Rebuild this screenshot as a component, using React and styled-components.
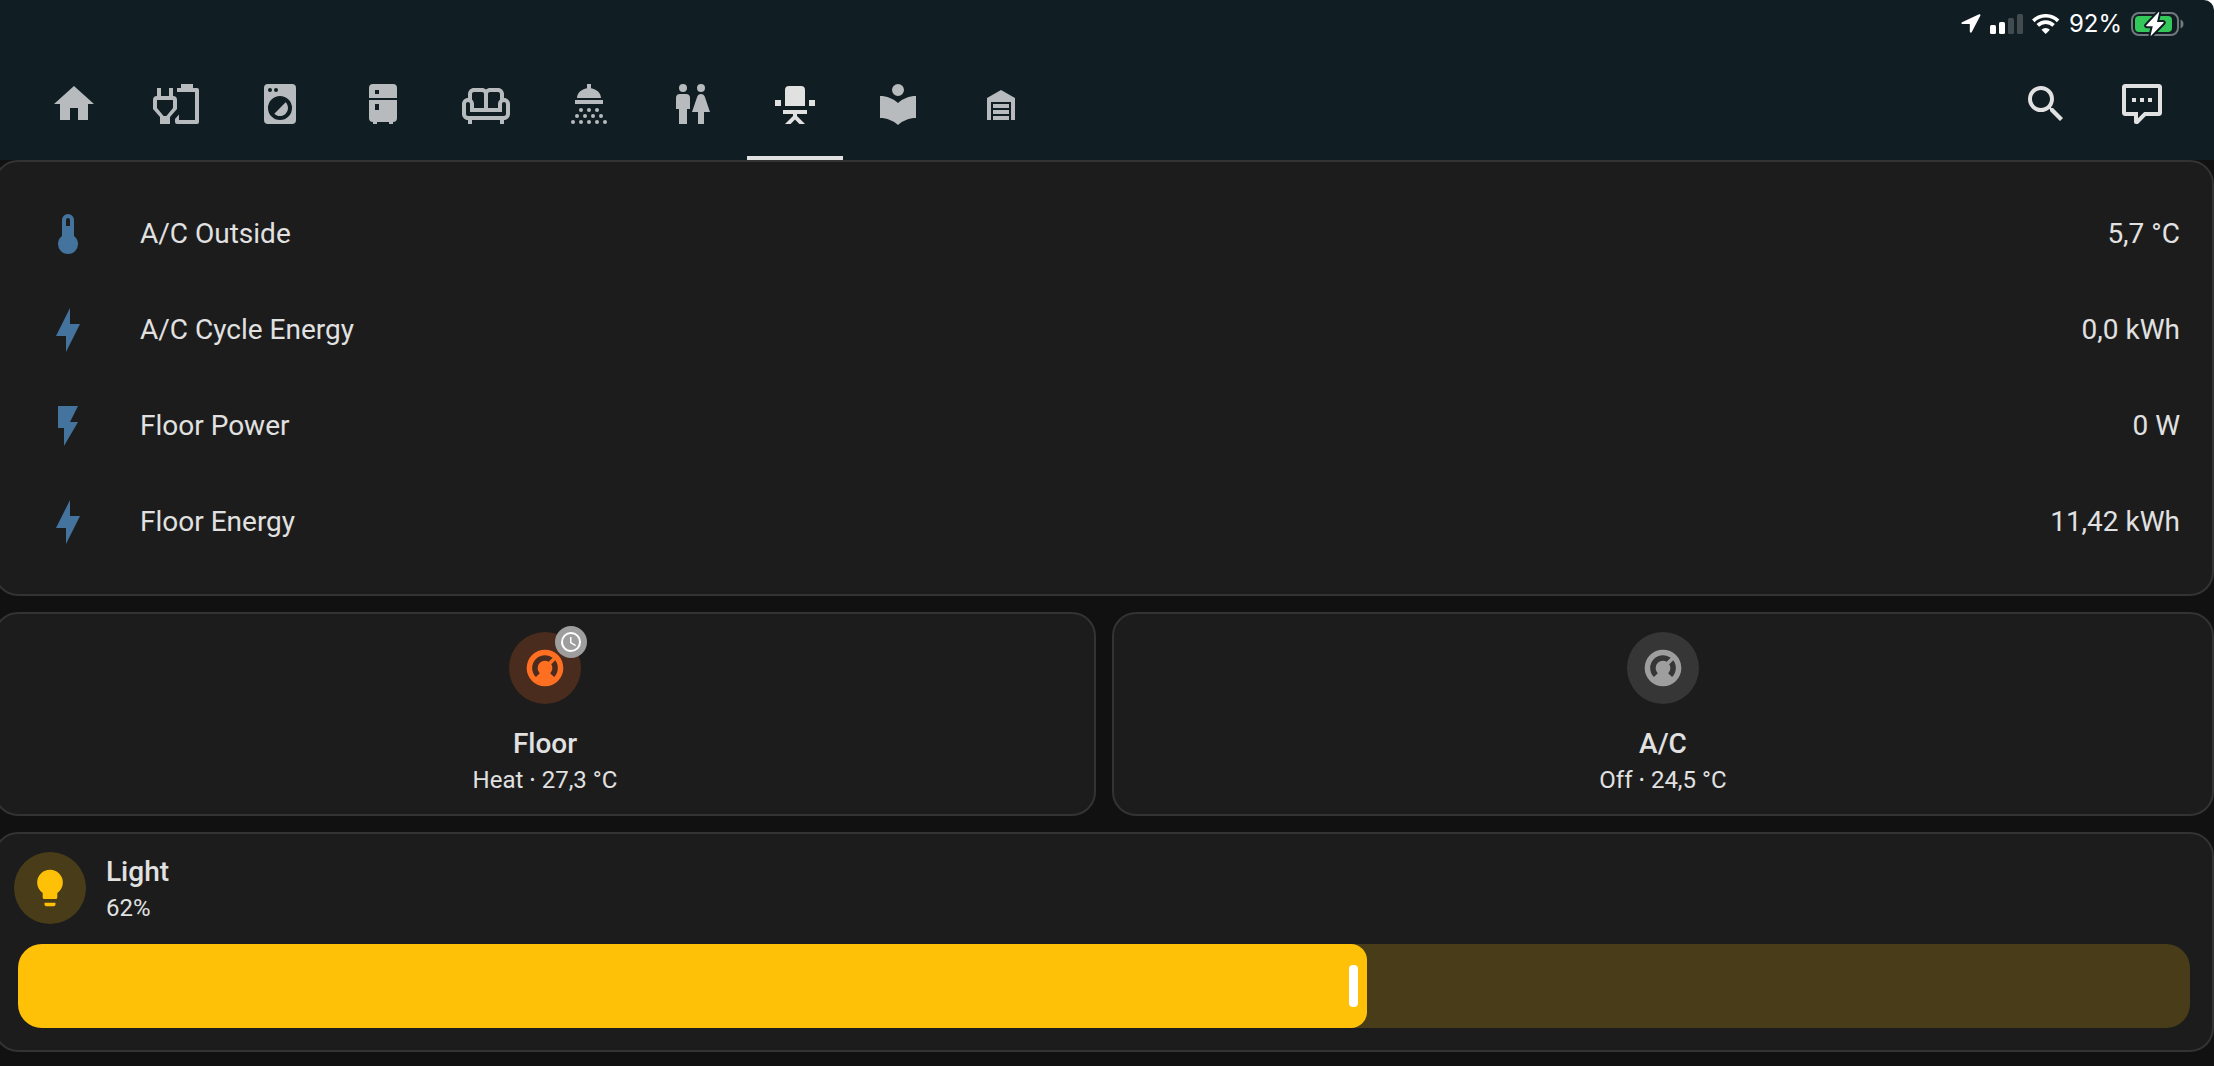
import React, { useState } from "react";
import styled, { createGlobalStyle } from "styled-components";

const icons = {
  home: "M10,20V14H14V20H19V12H22L12,3L2,12H5V20H10Z",
  plugBattery:
    "M8 4V8H4V4H2V8A2 2 0 0 0 0 10V14.5L3.5 18.5V22H8.5V18.5L12 14.5V10A2 2 0 0 0 10 8V4H8M10 14L6.7 18H5.3L2 14V10H10V14M13 20V17.3L11 19.5V21A1 1 0 0 0 12 22H22A1 1 0 0 0 23 21V5A1 1 0 0 0 22 4H20V2H14V4H12V6H21V20H13Z",
  washer:
    "M14.83,11.17C16.39,12.73 16.39,15.27 14.83,16.83C13.27,18.39 10.73,18.39 9.17,16.83L14.83,11.17M6,2H18A2,2 0 0,1 20,4V20A2,2 0 0,1 18,22H6A2,2 0 0,1 4,20V4A2,2 0 0,1 6,2M7,4A1,1 0 0,0 6,5A1,1 0 0,0 7,6A1,1 0 0,0 8,5A1,1 0 0,0 7,4M10,4A1,1 0 0,0 9,5A1,1 0 0,0 10,6A1,1 0 0,0 11,5A1,1 0 0,0 10,4M12,8A6,6 0 0,0 6,14A6,6 0 0,0 12,20A6,6 0 0,0 18,14A6,6 0 0,0 12,8Z",
  fridge:
    "M7,2H17A2,2 0 0,1 19,4V9H5V4A2,2 0 0,1 7,2M19,19A2,2 0 0,1 17,21V22H15V21H9V22H7V21A2,2 0 0,1 5,19V10H19V19M8,5V7H10V5H8M8,12V15H10V12H8Z",
  sofa: "M21 9V7C21 5.35 19.65 4 18 4H14C13.23 4 12.53 4.3 12 4.78C11.47 4.3 10.77 4 10 4H6C4.35 4 3 5.35 3 7V9C1.35 9 0 10.35 0 12V17C0 18.65 1.35 20 3 20V22H5V20H19V22H21V20C22.65 20 24 18.65 24 17V12C24 10.35 22.65 9 21 9M14 6H18C18.55 6 19 6.45 19 7V9.78C18.39 10.33 18 11.12 18 12V14H13V7C13 6.45 13.45 6 14 6M5 7C5 6.45 5.45 6 6 6H10C10.55 6 11 6.45 11 7V14H6V12C6 11.12 5.61 10.33 5 9.78V7M22 17C22 17.55 21.55 18 21 18H3C2.45 18 2 17.55 2 17V12C2 11.45 2.45 11 3 11S4 11.45 4 12V16H20V12C20 11.45 20.45 11 21 11S22 11.45 22 12V17Z",
  shower:
    "M11 2H13V4.1C15.8 4.5 18 6.5 18 9H6C6 6.5 8.2 4.5 11 4.1V2M5 10H19V12H5V10M7 15a1 1 0 1 0 2 0a1 1 0 1 0 -2 0M11 15a1 1 0 1 0 2 0a1 1 0 1 0 -2 0M15 15a1 1 0 1 0 2 0a1 1 0 1 0 -2 0M5 18a1 1 0 1 0 2 0a1 1 0 1 0 -2 0M9 18a1 1 0 1 0 2 0a1 1 0 1 0 -2 0M13 18a1 1 0 1 0 2 0a1 1 0 1 0 -2 0M17 18a1 1 0 1 0 2 0a1 1 0 1 0 -2 0M3 21a1 1 0 1 0 2 0a1 1 0 1 0 -2 0M7 21a1 1 0 1 0 2 0a1 1 0 1 0 -2 0M11 21a1 1 0 1 0 2 0a1 1 0 1 0 -2 0M15 21a1 1 0 1 0 2 0a1 1 0 1 0 -2 0M19 21a1 1 0 1 0 2 0a1 1 0 1 0 -2 0",
  people:
    "M7.5,2A2,2 0 0,1 9.5,4A2,2 0 0,1 7.5,6A2,2 0 0,1 5.5,4A2,2 0 0,1 7.5,2M6,7H9A2,2 0 0,1 11,9V14.5H9.5V22H5.5V14.5H4V9A2,2 0 0,1 6,7M16.5,2A2,2 0 0,1 18.5,4A2,2 0 0,1 16.5,6A2,2 0 0,1 14.5,4A2,2 0 0,1 16.5,2M15,22V16H12L14.59,8.41C14.84,7.59 15.6,7 16.5,7C17.4,7 18.16,7.59 18.41,8.41L21,16H18V22H15Z",
  chair:
    "M9 3H15A2 2 0 0 1 17 5V13H7V5A2 2 0 0 1 9 3M2 10H5V13H2V10M19 10H22V13H19V10M6 15H18V17H13V18L17 22H14.2L12 19.8L9.8 22H7L11 18V17H6V15Z",
  reading:
    "M12,8A3,3 0 0,0 15,5A3,3 0 0,0 12,2A3,3 0 0,0 9,5A3,3 0 0,0 12,8M12,11.54C9.64,9.35 6.5,8 3,8V19C6.5,19 9.64,20.35 12,22.54C14.36,20.35 17.5,19 21,19V8C17.5,8 14.36,9.35 12,11.54Z",
  garage:
    "M19,20H17V11H7V20H5V9L12,5L19,9V20M8,12H16V14H8V12M8,15H16V17H8V15M16,18V20H8V18H16Z",
  search:
    "M9.5,3A6.5,6.5 0 0,1 16,9.5C16,11.11 15.41,12.59 14.44,13.73L14.71,14H15.5L20.5,19L19,20.5L14,15.5V14.71L13.73,14.44C12.59,15.41 11.11,16 9.5,16A6.5,6.5 0 0,1 3,9.5A6.5,6.5 0 0,1 9.5,3M9.5,5C7,5 5,7 5,9.5C5,12 7,14 9.5,14C12,14 14,12 14,9.5C14,7 12,5 9.5,5Z",
  message:
    "M20.5 2H3.5C2.7 2 2 2.7 2 3.5V16.5C2 17.3 2.7 18 3.5 18H8V21C8 21.6 8.4 22 9 22H9.5C9.7 22 10 21.9 10.2 21.7L13.9 18H20.5C21.3 18 22 17.3 22 16.5V3.5C22 2.7 21.3 2 20.5 2M20 16H13.1L10 19.1V16H4V4H20V16M17 11H15V9H17V11M13 11H11V9H13V11M9 11H7V9H9V11Z",
  thermometer:
    "M15 13V5A3 3 0 0 0 9 5V13A5 5 0 1 0 15 13M12 4A1 1 0 0 1 13 5V8H11V5A1 1 0 0 1 12 4Z",
  bolt: "M11 15H6L13 1V9H18L11 23V15Z",
  flash: "M7,2V13H10V22L17,10H13L17,2H7Z",
  thermostat:
    "M16.95,16.95L14.83,14.83C15.55,14.1 16,13.1 16,12C16,11.26 15.79,10.57 15.43,10L17.6,7.81C18.5,9 19,10.43 19,12C19,13.93 18.22,15.68 16.95,16.95M12,5C13.57,5 15,5.5 16.19,6.4L14,8.56C13.43,8.21 12.74,8 12,8A4,4 0 0,0 8,12C8,13.1 8.45,14.1 9.17,14.83L7.05,16.95C5.78,15.68 5,13.93 5,12A7,7 0 0,1 12,5M12,2A10,10 0 0,0 2,12A10,10 0 0,0 12,22A10,10 0 0,0 22,12A10,10 0 0,0 12,2Z",
  clock:
    "M12,20A8,8 0 0,0 20,12A8,8 0 0,0 12,4A8,8 0 0,0 4,12A8,8 0 0,0 12,20M12,2A10,10 0 0,1 22,12A10,10 0 0,1 12,22C6.47,22 2,17.5 2,12A10,10 0 0,1 12,2M12.5,7V12.25L17,14.92L16.25,16.15L11,13V7H12.5Z",
  bulb: "M12,2A7,7 0 0,0 5,9C5,11.38 6.19,13.47 8,14.74V17A1,1 0 0,0 9,18H15A1,1 0 0,0 16,17V14.74C17.81,13.47 19,11.38 19,9A7,7 0 0,0 12,2M9,21A1,1 0 0,0 10,22H14A1,1 0 0,0 15,21V20H9V21Z",
};

const tabs = [
  { id: "home", label: "Home" },
  { id: "plugBattery", label: "Energy" },
  { id: "washer", label: "Laundry" },
  { id: "fridge", label: "Kitchen" },
  { id: "sofa", label: "Living room" },
  { id: "shower", label: "Bathroom" },
  { id: "people", label: "Toilet" },
  { id: "chair", label: "Office" },
  { id: "reading", label: "Library" },
  { id: "garage", label: "Garage" },
];

const sensors = [
  { icon: "thermometer", name: "A/C Outside", state: "5,7 °C" },
  { icon: "bolt", name: "A/C Cycle Energy", state: "0,0 kWh" },
  { icon: "flash", name: "Floor Power", state: "0 W" },
  { icon: "bolt", name: "Floor Energy", state: "11,42 kWh" },
];

const Icon = ({ name, size = 48 }) => (
  <svg width={size} height={size} viewBox="0 0 24 24" fill="currentColor" aria-hidden="true">
    <path d={icons[name]} />
  </svg>
);

const StatusIcons = () => (
  <StatusBar>
    <svg width="20" height="20" viewBox="0 0 20 20" fill="#fff">
      <path d="M18.1.3 1 8.2c-1 .5-.8 1.8.4 1.8l7.4.1v7.5c0 1.200 1.500 1.500 2 .4L19.400 1.500c.3-.8-.5-1.500-1.300-1.200Z" />
    </svg>
    <svg width="33" height="20" viewBox="0 0 33 20" fill="#fff">
      <rect x="0" y="11" width="6" height="9" rx="1.500" />
      <rect x="9" y="8" width="6" height="12" rx="1.500" />
      <rect x="18" y="4" width="6" height="16" rx="1.500" fill="#414b50" />
      <rect x="27" y="0" width="6" height="20" rx="1.500" fill="#414b50" />
    </svg>
    <svg width="28" height="20" viewBox="0 0 28 20" fill="none" stroke="#fff" strokeWidth="3.600">
      <path d="M1.300 6.900A17.600 17.600 0 0 1 26.100 6.900" />
      <path d="M5.800 11.400A11.200 11.200 0 0 1 21.600 11.400" />
      <path d="M13.700 20 9.500 15.700A6 6 0 0 1 17.900 15.700Z" fill="#fff" stroke="none" />
    </svg>
    <Percent>92%</Percent>
    <svg width="53" height="24" viewBox="0 0 53 24">
      <rect x="1" y="1" width="46" height="22" rx="7" fill="none" stroke="#70787b" strokeWidth="2" />
      <path d="M49.500 7.500c4 1.500 4 7.500 0 9Z" fill="#70787b" />
      <rect x="4" y="4" width="37" height="16" rx="4" fill="#34c759" />
      <path
        d="M27.500.3 15.300 13.200c-.4.5-.2 1 .5 1h6L19.600 23.300c-.1.500.4.600.7.300L32.500 11c.5-.5.200-1.100-.4-1.100H26L28.200.600c.1-.5-.3-.7-.7-.3Z"
        fill="#fff"
        stroke="#101e24"
        strokeWidth="4"
        paintOrder="stroke"
      />
    </svg>
  </StatusBar>
);

const Climate = ({ name, state, color, tint, badge }) => (
  <ClimateCard>
    <Shape $color={color} $tint={tint}>
      <Icon name="thermostat" size={44} />
      {badge && (
        <Badge>
          <Icon name={badge} size={24} />
        </Badge>
      )}
    </Shape>
    <Info $center>
      <Primary>{name}</Primary>
      <Secondary>{state}</Secondary>
    </Info>
  </ClimateCard>
);

export default function App() {
  const [active, setActive] = useState("chair");
  const [brightness, setBrightness] = useState(62.1);

  return (
    <>
      <GlobalStyle />
      <HeaderWrap>
        <Header>
          <StatusIcons />
          <Toolbar>
            <Tabs>
              {tabs.map((tab) => (
                <Tab
                  key={tab.id}
                  href={`#${tab.id}`}
                  aria-label={tab.label}
                  $active={tab.id === active}
                  onClick={() => setActive(tab.id)}
                >
                  <Icon name={tab.id} />
                </Tab>
              ))}
            </Tabs>
            <Actions>
              <IconBtn type="button" aria-label="Search">
                <Icon name="search" />
              </IconBtn>
              <IconBtn type="button" aria-label="Assist">
                <Icon name="message" />
              </IconBtn>
            </Actions>
          </Toolbar>
        </Header>
      </HeaderWrap>
      <View>
        <EntitiesCard>
          {sensors.map((sensor) => (
            <EntityRow key={sensor.name}>
              <EntityIcon>
                <Icon name={sensor.icon} />
              </EntityIcon>
              <EntityName>{sensor.name}</EntityName>
              <span>{sensor.state}</span>
            </EntityRow>
          ))}
        </EntitiesCard>
        <Columns>
          <Climate name="Floor" state="Heat ⸱ 27,3 °C" color="#ff6f22" tint="#4a2c1e" badge="clock" />
          <Climate name="A/C" state="Off ⸱ 24,5 °C" color="#9e9e9e" tint="#363636" />
        </Columns>
        <LightCard>
          <LightHead>
            <Shape $color="#ffc107" $tint="#493c18">
              <Icon name="bulb" size={44} />
            </Shape>
            <Info>
              <Primary as="label" htmlFor="light">
                Light
              </Primary>
              <Secondary>{Math.round(brightness)}%</Secondary>
            </Info>
          </LightHead>
          <Slider>
            <SliderFill style={{ width: `${brightness}%` }}>
              <SliderHandle />
            </SliderFill>
            <SliderInput
              id="light"
              type="range"
              min="0"
              max="100"
              step="0.1"
              value={brightness}
              onChange={(e) => setBrightness(Number(e.target.value))}
            />
          </Slider>
        </LightCard>
      </View>
    </>
  );
}

const GlobalStyle = createGlobalStyle`
  * {
    box-sizing: border-box;
  }
  body {
    margin: 0;
    background-color: #111111;
    color: #e1e1e1;
    font-family: Roboto, "Noto Sans", sans-serif;
    font-size: 28px;
    overflow-x: hidden;
  }
  svg {
    display: block;
    flex-shrink: 0;
  }
`;

const HeaderWrap = styled.div`
  background-color: #ffffff;
`;

const Header = styled.header`
  background-color: #101e24;
  border-top-right-radius: 10px;
`;

const StatusBar = styled.div`
  display: flex;
  align-items: center;
  justify-content: flex-end;
  gap: 9px;
  height: 48px;
  padding-right: 30px;
`;

const Percent = styled.span`
  font-family: Inter, sans-serif;
  font-size: 24px;
  line-height: 24px;
  color: #ffffff;
`;

const Toolbar = styled.div`
  display: flex;
  justify-content: space-between;
  height: 112px;
  padding: 0 24px 0 26px;
`;

const Tabs = styled.nav`
  display: flex;
  gap: 7px;
`;

const Tab = styled.a`
  display: flex;
  align-items: center;
  padding: 4px 24px 0;
  color: ${(props) => (props.$active ? "#e1e1e1" : "#b7bbbd")};
  border-bottom: 4px solid ${(props) => (props.$active ? "#e1e1e1" : "transparent")};
`;

const Actions = styled.div`
  display: flex;
`;

const IconBtn = styled.button`
  display: flex;
  align-items: center;
  padding: 0 24px;
  border: 0;
  background: none;
  color: #e1e1e1;
`;

const View = styled.main`
  display: flex;
  flex-direction: column;
  gap: 16px;
  margin-left: -6px;
`;

const Card = styled.section`
  background-color: #1c1c1c;
  border: 2px solid #333333;
  border-radius: 24px;
`;

const EntitiesCard = styled(Card).attrs({ as: "ul" })`
  display: flex;
  flex-direction: column;
  gap: 16px;
  margin: 0;
  padding: 32px;
  list-style: none;
`;

const EntityRow = styled.li`
  display: flex;
  align-items: center;
  height: 80px;
  line-height: 40px;
`;

const EntityIcon = styled.div`
  display: flex;
  justify-content: center;
  width: 80px;
  color: #44739e;
`;

const EntityName = styled.span`
  flex: 1;
  padding-left: 32px;
`;

const Columns = styled.div`
  display: grid;
  grid-template-columns: 1fr 1fr;
  gap: 16px;
`;

const ClimateCard = styled(Card)`
  display: flex;
  flex-direction: column;
  align-items: center;
  gap: 20px;
  padding: 18px;
`;

const Shape = styled.div`
  position: relative;
  display: flex;
  align-items: center;
  justify-content: center;
  width: 72px;
  height: 72px;
  border-radius: 50%;
  color: ${(props) => props.$color};
  background-color: ${(props) => props.$tint};
`;

const Badge = styled.div`
  position: absolute;
  top: -6px;
  right: -6px;
  display: flex;
  align-items: center;
  justify-content: center;
  width: 32px;
  height: 32px;
  border-radius: 50%;
  color: #ffffff;
  background-color: #9e9e9e;
`;

const Info = styled.div`
  display: flex;
  flex-direction: column;
  align-items: ${(props) => (props.$center ? "center" : "flex-start")};
`;

const Primary = styled.span`
  font-weight: 500;
  line-height: 40px;
`;

const Secondary = styled.span`
  font-size: 24px;
  line-height: 32px;
`;

const LightCard = styled(Card)`
  display: flex;
  flex-direction: column;
  gap: 20px;
  padding: 18px 22px 22px;
`;

const LightHead = styled.div`
  display: flex;
  gap: 20px;
  margin-left: -4px;
`;

const Slider = styled.div`
  position: relative;
  height: 84px;
  border-radius: 24px;
  overflow: hidden;
  background-color: #493c18;
`;

const SliderFill = styled.div`
  display: flex;
  align-items: center;
  justify-content: flex-end;
  height: 100%;
  padding-right: 9px;
  border-radius: 0 16px 16px 0;
  background-color: #ffc107;
`;

const SliderHandle = styled.div`
  width: 9px;
  height: 42px;
  border-radius: 4px;
  background-color: #ffffff;
`;

const SliderInput = styled.input`
  position: absolute;
  inset: 0;
  width: 100%;
  height: 100%;
  margin: 0;
  opacity: 0;
  cursor: pointer;
`;
